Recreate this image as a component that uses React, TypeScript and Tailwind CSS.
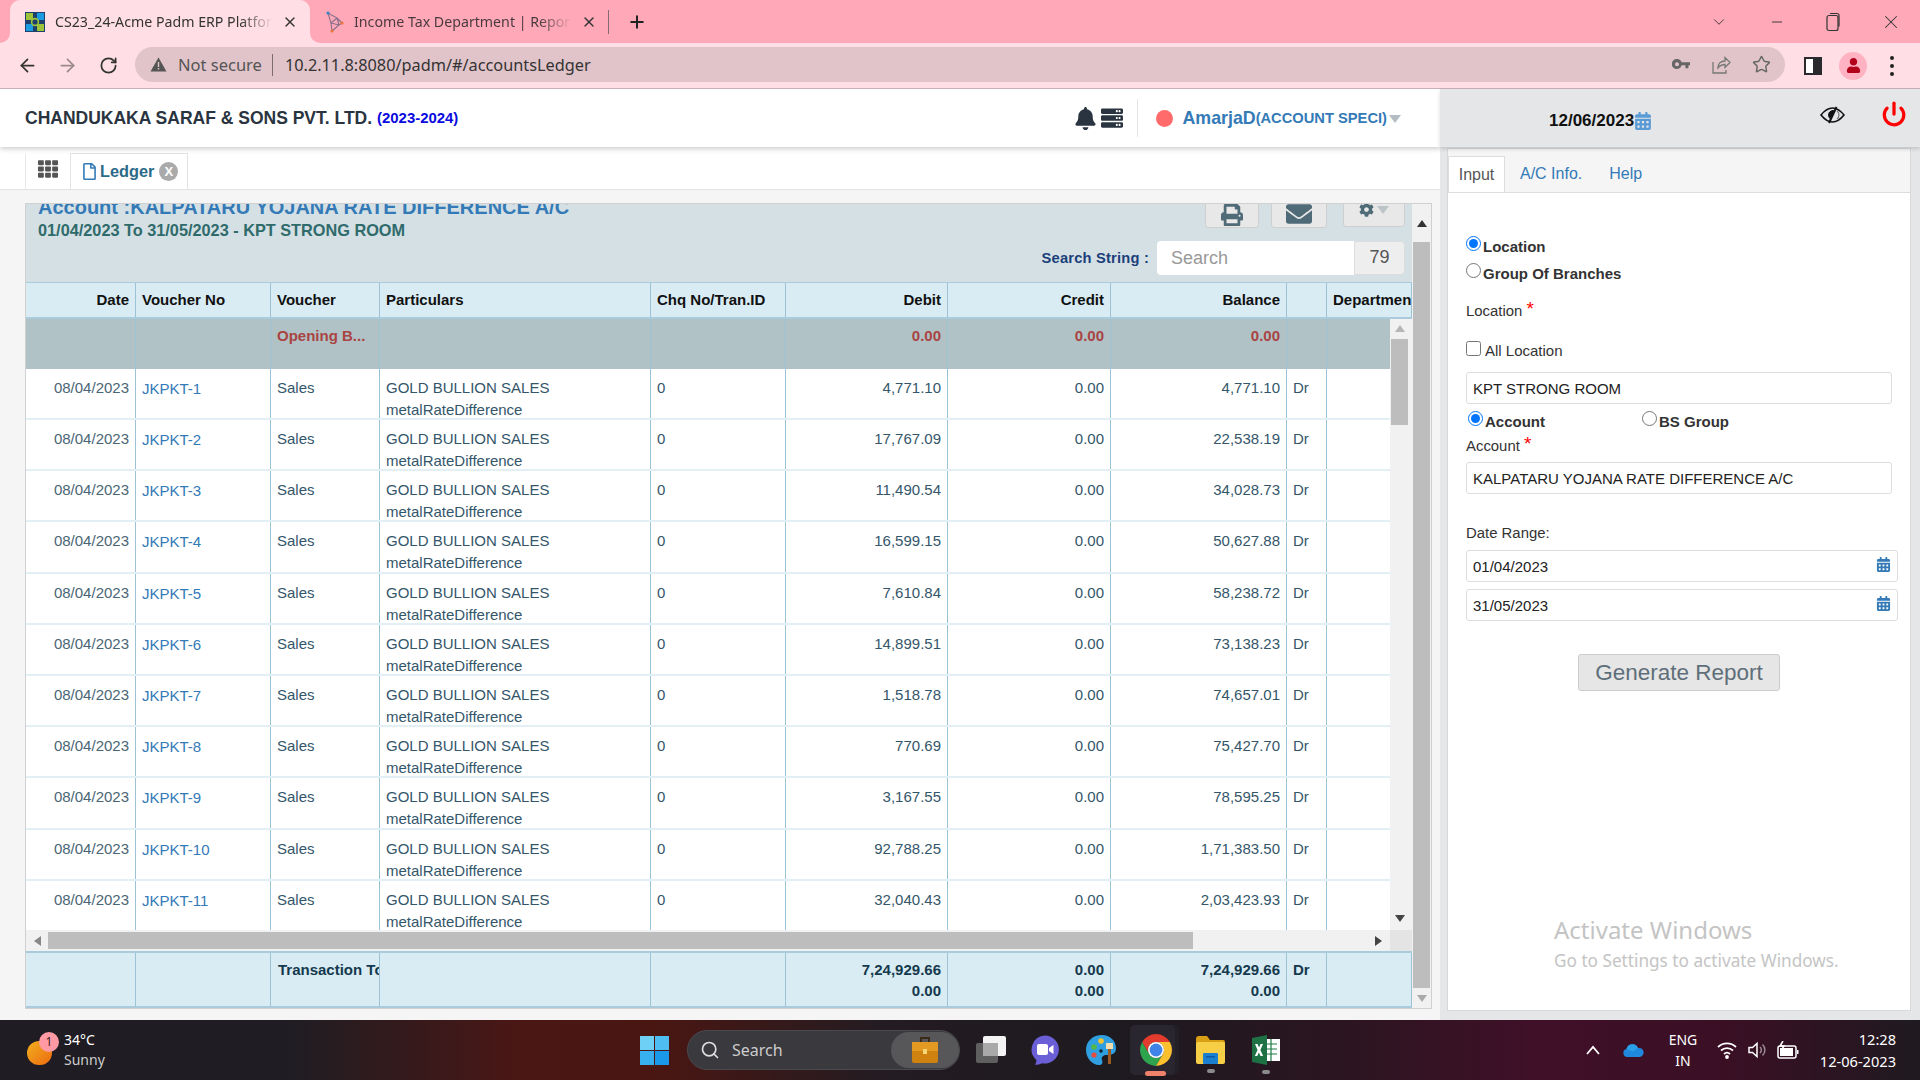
import { ArrowLeft, ArrowRight, ChevronDown, Minus, Plus, Power, RotateCw, Search, Star, X } from "lucide-react";
import { FaBell, FaCalendarAlt, FaCog, FaEnvelope, FaPrint, FaRegFile, FaServer, FaTh, FaUser } from "react-icons/fa";

const rows = [
  ["JKPKT-1", "4,771.10", "4,771.10"],
  ["JKPKT-2", "17,767.09", "22,538.19"],
  ["JKPKT-3", "11,490.54", "34,028.73"],
  ["JKPKT-4", "16,599.15", "50,627.88"],
  ["JKPKT-5", "7,610.84", "58,238.72"],
  ["JKPKT-6", "14,899.51", "73,138.23"],
  ["JKPKT-7", "1,518.78", "74,657.01"],
  ["JKPKT-8", "770.69", "75,427.70"],
  ["JKPKT-9", "3,167.55", "78,595.25"],
  ["JKPKT-10", "92,788.25", "1,71,383.50"],
  ["JKPKT-11", "32,040.43", "2,03,423.93"],
];

const gridCols = "grid grid-cols-[110px_135px_109px_271px_135px_162px_163px_176px_40px_85px]";
const cell = "border-r border-[#9cc3d5] px-[6px] overflow-hidden whitespace-nowrap";
const cellR = "border-r border-[#9cc3d5] pl-[6px] pr-[6px] text-right overflow-hidden whitespace-nowrap";

function Flare({ side }: { side: "left" | "right" }) {
  return (
    <div className="w-[10px] h-[10px] bg-[#ffdfe5] self-end">
      <div className={`w-full h-full bg-[#ffa9b8] ${side === "left" ? "rounded-br-[10px]" : "rounded-bl-[10px]"}`} />
    </div>
  );
}

function TabBar() {
  return (
    <div className="h-[43px] bg-[#ffa9b8] flex items-stretch text-[14.2px] text-[#333]">
      <Flare side="left" />
      <div className="w-[300px] bg-[#ffdfe5] rounded-t-[10px] flex items-center pl-[15px]">
        <svg width="20" height="20" viewBox="0 0 20 20" className="shrink-0">
          <rect width="20" height="20" fill="#1d3f6b" />
          <rect x="1" y="1" width="7" height="7" fill="#9cc33a" />
          <rect x="12" y="1" width="7" height="7" fill="#1b9ce0" />
          <rect x="1" y="12" width="7" height="7" fill="#1b9ce0" />
          <rect x="12" y="12" width="7" height="7" fill="#9cc33a" />
          <circle cx="10" cy="10" r="3.4" fill="none" stroke="#9cc33a" strokeWidth="1.6" />
        </svg>
        <span className="ml-[10px] w-[218px] overflow-hidden whitespace-nowrap [mask-image:linear-gradient(to_right,black_85%,transparent)]">CS23_24-Acme Padm ERP Platform</span>
        <X size={16} className="ml-[9px] shrink-0" />
      </div>
      <Flare side="right" />
      <div className="flex items-center pl-[5px]">
        <svg width="20" height="22" viewBox="0 0 20 22" className="shrink-0" fill="none">
          <path d="M3 2 L12 7 L6 12 L14 14 L7 20 M3 2 L6 12 L7 20 M12 7 L14 14 M12 7 L17 12 L14 14" stroke="#8a6f8a" strokeWidth="1.1" />
          <circle cx="3" cy="2" r="1.6" fill="#3d7fc4" />
          <circle cx="17" cy="12" r="1.6" fill="#e8763a" />
          <circle cx="7" cy="20" r="1.6" fill="#e8763a" />
        </svg>
        <span className="ml-[9px] w-[218px] overflow-hidden whitespace-nowrap text-[#4a3a40] [mask-image:linear-gradient(to_right,black_85%,transparent)]">Income Tax Department | Reporting</span>
        <X size={16} className="ml-[9px] shrink-0" />
        <div className="ml-[11px] w-px h-[24px] bg-[#8a6a72]" />
        <Plus size={20} strokeWidth={2.4} className="ml-[18px] text-[#222]" />
      </div>
      <div className="ml-auto flex items-center text-[#333]">
        <ChevronDown size={18} strokeWidth={1.2} className="mr-[41px]" />
        <Minus size={16} strokeWidth={1.4} className="mr-[40px]" />
        <svg width="16" height="20" viewBox="0 0 16 20" fill="none" stroke="currentColor" strokeWidth="1.2" className="mr-[39px]">
          <rect x="2" y="3.5" width="11" height="15" rx="2" />
          <path d="M5 1.5 h7 a2 2 0 0 1 2 2 v11" />
        </svg>
        <X size={22} strokeWidth={1.1} className="mr-[18px]" />
      </div>
    </div>
  );
}

function Toolbar() {
  return (
    <div className="h-[46px] bg-[#ffdfe5] border-b border-[#c9b0b8] flex items-center text-[#333]">
      <ArrowLeft size={21} strokeWidth={2} className="ml-[17px] shrink-0" />
      <ArrowRight size={21} strokeWidth={2} className="ml-[19px] shrink-0 text-[#9a8a8e]" />
      <RotateCw size={19} strokeWidth={2.2} className="ml-[21px] shrink-0" />
      <div className="ml-[17px] w-[1650px] h-[35px] rounded-full bg-[#e0c4c9] flex items-center mb-[2px]">
        <svg width="17" height="15" viewBox="0 0 17 15" className="ml-[15px] shrink-0">
          <path d="M8.5 0.5 L16.5 14.5 H0.5 Z" fill="#555" />
          <rect x="7.8" y="5" width="1.4" height="5" fill="#e0c4c9" />
          <rect x="7.8" y="11" width="1.4" height="1.5" fill="#e0c4c9" />
        </svg>
        <span className="ml-[11px] mt-[1px] text-[16.5px] text-[#555]">Not secure</span>
        <div className="ml-[10px] w-px h-[22px] bg-[#7c6a6e]" />
        <span className="ml-[12px] mt-[1px] text-[16.3px] text-[#333]">10.2.11.8:8080/padm/#/accountsLedger</span>
        <div className="ml-auto flex items-center mr-[14px] text-[#666]">
          <svg width="18" height="11" viewBox="0 0 18 11" className="mr-[22px]">
            <path d="M5 0a5 5 0 0 1 4.6 3.2H18v3h-1.6v3h-3v-3H9.6A5 5 0 1 1 5 0zm0 3.2a2 2 0 1 0 0 4 2 2 0 0 0 0-4z" fill="#666" fillRule="evenodd" />
          </svg>
          <svg width="19" height="19" viewBox="0 0 19 19" fill="none" stroke="#777" strokeWidth="1.3" className="mr-[21px]">
            <path d="M1 7v11h13v-3" />
            <path d="M6 13c0-5 3-7 7-7V2.5l5 5-5 5V9.5c-3 0-5 1-7 3.5z" />
          </svg>
          <Star size={19} strokeWidth={1.8} />
        </div>
      </div>
      <div className="ml-[19px] w-[18px] h-[18px] border-[2px] border-[#2a2a2e] border-r-[9px] shrink-0 bg-white" />
      <div className="ml-[17px] w-[28px] h-[28px] rounded-full bg-[#ffb3c2] flex items-center justify-center shrink-0">
        <FaUser size={15} className="text-[#b3001b]" />
      </div>
      <div className="ml-[23px] flex flex-col gap-[4px] shrink-0">
        <div className="w-[4px] h-[4px] rounded-full bg-[#222]" />
        <div className="w-[4px] h-[4px] rounded-full bg-[#222]" />
        <div className="w-[4px] h-[4px] rounded-full bg-[#222]" />
      </div>
    </div>
  );
}

function AppHeader() {
  return (
    <div className="h-[58px] bg-white flex items-center shadow-[0_2px_5px_rgba(0,0,0,0.2)] relative z-10">
      <span className="ml-[25px] text-[17.5px] font-bold text-[#2a3440]">CHANDUKAKA SARAF &amp; SONS PVT. LTD.</span>
      <span className="ml-[5px] text-[14.9px] font-bold text-[#0a0ae0] mt-[1px]">(2023-2024)</span>
      <FaBell size={23} className="ml-auto text-[#2a3440]" />
      <FaServer size={22} className="ml-[4px] text-[#2a3440]" />
      <div className="ml-[14px] w-px h-[38px] bg-[#e5e5e5]" />
      <div className="ml-[18px] w-[17px] h-[17px] rounded-full bg-[#ff6b6b]" />
      <span className="ml-[9px] text-[17.8px] font-bold text-[#337ab7]">AmarjaD</span>
      <span className="text-[14.7px] font-bold text-[#337ab7] mt-[1px]">(ACCOUNT SPECI)</span>
      <svg width="12" height="8" viewBox="0 0 12 8" className="ml-[2px] mr-[39px] mt-[2px]"><path d="M0 0H12L6 8Z" fill="#b5bcc2" /></svg>
    </div>
  );
}

function LeftTabs() {
  return (
    <div className="h-[43px] bg-white border-b border-[#e3e3e3] flex items-end pl-[25px]">
      <div className="w-[45px] h-[35px] border-l border-[#e8e8e8] flex justify-center pt-[5px]">
        <FaTh size={20} className="text-[#555]" />
      </div>
      <div className="w-[118px] h-[36px] border border-b-0 border-[#e3e3e3] bg-white flex items-center pl-[10px]">
        <FaRegFile size={17} className="text-[#337ab7]" />
        <span className="ml-[2px] text-[16.3px] font-bold text-[#2b6a88]">Ledger</span>
        <span className="ml-[5px] w-[19px] h-[19px] rounded-full bg-[#aaa] text-white text-[13px] font-bold flex items-center justify-center">X</span>
      </div>
    </div>
  );
}

function PanelHeading() {
  return (
    <div className="h-[78px] bg-[#d5e0e5] flex justify-between overflow-hidden">
      <div className="pl-[12px] -mt-[9px]">
        <div className="text-[20px] leading-[24px] font-bold text-[#337ab7] whitespace-nowrap">Account :KALPATARU YOJANA RATE DIFFERENCE A/C</div>
        <div className="text-[16.3px] leading-[20px] font-bold text-[#2f6b6b] whitespace-nowrap mt-[1px]">01/04/2023 To 31/05/2023 - KPT STRONG ROOM</div>
      </div>
      <div className="flex flex-col items-end pr-[7px]">
        <div className="h-[24px] flex items-end">
          <div className="w-[54px] h-[30px] bg-[#e8e8e8] border border-[#cfcfcf] rounded-[3px] flex items-center justify-center pt-[4px]">
            <FaPrint size={22} className="text-[#4f6b78]" />
          </div>
          <div className="ml-[12px] w-[56px] h-[30px] bg-[#e8e8e8] border border-[#cfcfcf] rounded-[3px] flex items-center justify-center pt-[2px]">
            <FaEnvelope size={26} className="text-[#4f6b78]" />
          </div>
          <div className="ml-[16px] w-[62px] h-[30px] bg-[#e8e8e8] border border-[#cfcfcf] rounded-[3px] flex items-start justify-center pt-[4px] mb-[1px]">
            <FaCog size={15} className="text-[#4f6b78]" />
            <svg width="12" height="8" viewBox="0 0 12 8" className="ml-[3px] mt-[4px]"><path d="M0 0H12L6 8Z" fill="#bcc4c8" /></svg>
          </div>
        </div>
        <div className="mt-[13px] flex items-center">
          <span className="text-[14.7px] font-bold text-[#1b3f7a] mr-[8px] tracking-[0.2px]">Search String :</span>
          <div className="w-[197px] h-[34px] bg-white rounded-l-[4px] flex items-center pl-[14px] text-[18px] text-[#999]">Search</div>
          <div className="w-[51px] h-[34px] bg-[#eee] border border-[#ddd] rounded-r-[4px] flex items-center justify-center text-[18px] text-[#555] -mt-[1px]">79</div>
        </div>
      </div>
    </div>
  );
}

function HeaderRow() {
  const heads = ["Date", "Voucher No", "Voucher", "Particulars", "Chq No/Tran.ID", "Debit", "Credit", "Balance", "", "Department"];
  return (
    <div className={`${gridCols} h-[37px] bg-[#d9ecf4] border-t border-b-2 border-[#a9cbdb] text-[15px] leading-[34px] font-bold text-[#111] overflow-hidden`}>
      {heads.map((h, i) => (
        <div key={i} className={i === 0 || (i >= 5 && i <= 7) ? cellR : cell}>{h}</div>
      ))}
    </div>
  );
}

function OpeningRow() {
  return (
    <div className={`${gridCols} h-[50px] bg-[#b0c2c6] text-[15px] leading-[34px] font-bold text-[#a94442]`}>
      <div className={cell} />
      <div className={cell} />
      <div className={cell}>Opening B...</div>
      <div className={cell} />
      <div className={cell} />
      <div className={cellR}>0.00</div>
      <div className={cellR}>0.00</div>
      <div className={cellR}>0.00</div>
      <div className={cell} />
      <div className={cell} />
    </div>
  );
}

function LedgerRow({ no, debit, balance }: { no: string; debit: string; balance: string }) {
  return (
    <div className={`${gridCols} h-[51.2px] bg-white border-b-2 border-[#e2eff5] text-[15px] leading-[22px] text-[#34566a]`}>
      <div className={`${cellR} pt-[8px] text-[#4a6675]`}>08/04/2023</div>
      <div className={`${cell} pt-[9px] text-[#337ab7]`}>{no}</div>
      <div className={`${cell} pt-[8px]`}>Sales</div>
      <div className={`${cell} pt-[8px]`}>
        <div>GOLD BULLION SALES</div>
        <div>metalRateDifference</div>
      </div>
      <div className={`${cell} pt-[8px]`}>0</div>
      <div className={`${cellR} pt-[8px]`}>{debit}</div>
      <div className={`${cellR} pt-[8px]`}>0.00</div>
      <div className={`${cellR} pt-[8px]`}>{balance}</div>
      <div className={`${cell} pt-[8px]`}>Dr</div>
      <div className={cell} />
    </div>
  );
}

function FooterRow() {
  return (
    <div className={`${gridCols} h-[57px] bg-[#d9ecf4] border-t-2 border-b-2 border-[#a9cbdb] text-[15px] leading-[21px] font-bold text-[#15394d] overflow-hidden`}>
      <div className={cell} />
      <div className={cell} />
      <div className={`${cell} pt-[6px] pl-[7px]`}>Transaction Total</div>
      <div className={cell} />
      <div className={cell} />
      <div className={`${cellR} pt-[6px]`}><div>7,24,929.66</div><div>0.00</div></div>
      <div className={`${cellR} pt-[6px]`}><div>0.00</div><div>0.00</div></div>
      <div className={`${cellR} pt-[6px]`}><div>7,24,929.66</div><div>0.00</div></div>
      <div className={`${cell} pt-[6px]`}>Dr</div>
      <div className={cell} />
    </div>
  );
}

function Arrow({ dir, color }: { dir: "up" | "down" | "left" | "right"; color: string }) {
  const d = { up: "M0 7L5 0L10 7Z", down: "M0 0L5 7L10 0Z", left: "M7 0L0 5L7 10Z", right: "M0 0L7 5L0 10Z" }[dir];
  const horizontal = dir === "left" || dir === "right";
  return (
    <svg width={horizontal ? 7 : 10} height={horizontal ? 10 : 7} viewBox={horizontal ? "0 0 7 10" : "0 0 10 7"}>
      <path d={d} fill={color} />
    </svg>
  );
}

function LedgerPanel() {
  return (
    <div className="h-[806px] w-[1407px] bg-[#f1f1f1] border border-[#d0d0d0] flex overflow-hidden">
      <div className="w-[1386px] shrink-0 flex flex-col overflow-hidden">
        <PanelHeading />
        <HeaderRow />
        {/* body with its own scrollbars */}
        <div className="h-[612px] flex overflow-hidden">
          <div className="flex-1 overflow-hidden">
            <OpeningRow />
            {rows.map((r) => (
              <LedgerRow key={r[0]} no={r[0]} debit={r[1]} balance={r[2]} />
            ))}
          </div>
          <div className="w-[22px] bg-[#f1f1f1] flex flex-col items-center">
            <div className="h-[20px] flex items-center pr-[3px]"><Arrow dir="up" color="#b5b5b5" /></div>
            <div className="w-[17px] h-[86px] bg-[#bdbdbd] mr-[3px]" />
            <div className="mt-auto h-[24px] flex items-center pr-[3px]"><Arrow dir="down" color="#444" /></div>
          </div>
        </div>
        <div className="h-[21px] bg-[#f1f1f1] flex items-center">
          <div className="w-[22px] flex justify-center"><Arrow dir="left" color="#888" /></div>
          <div className="w-[1145px] h-[17px] bg-[#bdbdbd]" />
          <div className="ml-auto w-[22px] flex justify-center mr-[1px]"><Arrow dir="right" color="#444" /></div>
          <div className="w-[22px] h-full bg-[#e4e4e4]" />
        </div>
        <FooterRow />
      </div>
      <div className="flex-1 bg-[#f1f1f1] flex flex-col items-center">
        <div className="h-[38px] flex items-center"><Arrow dir="up" color="#333" /></div>
        <div className="w-[17px] h-[746px] bg-[#bdbdbd]" />
        <div className="h-[20px] flex items-center"><Arrow dir="down" color="#aaa" /></div>
      </div>
    </div>
  );
}

function RequiredLabel({ text }: { text: string }) {
  return (
    <div className="h-[20px] text-[14.9px] leading-[18px] text-[#333]">
      {text} <span className="text-[#f00] text-[19px] leading-none relative -top-[1px]">*</span>
    </div>
  );
}

function DateField({ value }: { value: string }) {
  return (
    <div className="relative w-[432px] mt-[7px]">
      <input readOnly defaultValue={value} className="w-full h-[32px] border border-[#ddd] rounded-[3px] pl-[6px] text-[15px] text-[#222] bg-white outline-none" />
      <FaCalendarAlt size={15} className="absolute right-[7px] top-[7px] text-[#337ab7]" />
    </div>
  );
}

function RightPanel() {
  return (
    <div className="w-[480px] h-[931px] bg-[#e4e6e8] flex flex-col relative">
      <div className="h-[58px] flex items-center shadow-[0_2px_4px_rgba(0,0,0,0.15)] relative z-10">
        <span className="ml-[109px] text-[17px] font-bold text-[#111] mt-[6px]">12/06/2023</span>
        <FaCalendarAlt size={18} className="text-[#5b9bd5] mt-[6px]" />
        <svg width="25" height="18" viewBox="0 0 25 18" fill="none" className="ml-[168px] mb-[6px]">
          <path d="M1 9C5 4 9 2 12.5 2S20 4 24 9C20 14 16 16 12.5 16S5 14 1 9Z" stroke="#111" strokeWidth="1.6" />
          <path d="M8 9a5 5 0 0 1 7-4.5L10 13a5 5 0 0 1-2-4Z" fill="#111" />
          <path d="M16.5 1L9 17" stroke="#111" strokeWidth="2" />
          <path d="M17 5a5 5 0 0 1 0 8" stroke="#777" strokeWidth="1.2" />
        </svg>
        <Power size={26} strokeWidth={3} className="ml-[36px] mb-[8px] text-[#f00]" />
      </div>
      <div className="ml-[7px] w-[464px] h-[863px] mt-[1px] bg-white border border-[#d8d8d8] flex flex-col">
        <div className="h-[44px] bg-[#f5f5f5] border-b border-[#ddd] flex items-end text-[16px]">
          <div className="w-[57px] h-[36px] bg-white border border-b-0 border-[#ddd] flex items-center justify-center text-[#555]">Input</div>
          <span className="ml-[15px] h-[36px] leading-[36px] text-[#337ab7]">A/C Info.</span>
          <span className="ml-[27px] h-[36px] leading-[36px] text-[#337ab7]">Help</span>
        </div>
        <div className="pl-[18px] pt-[43px] flex-1">
          <div className="h-[27px] flex items-start">
            <input type="radio" name="scope" defaultChecked className="w-[15px] h-[15px] m-0" />
            <span className="ml-[2px] mt-[2px] text-[15px] font-bold leading-[18px] text-[#333]">Location</span>
          </div>
          <div className="h-[37px] flex items-start">
            <input type="radio" name="scope" className="w-[15px] h-[15px] m-0" />
            <span className="ml-[2px] mt-[2px] text-[15px] font-bold leading-[18px] text-[#333]">Group Of Branches</span>
          </div>
          <RequiredLabel text="Location" />
          <div className="mt-[21px] h-[31px] flex items-start">
            <input type="checkbox" className="w-[15px] h-[15px] m-0" />
            <span className="ml-[4px] mt-[1px] text-[15px] leading-[18px] text-[#333]">All Location</span>
          </div>
          <input readOnly defaultValue="KPT STRONG ROOM" className="block w-[426px] h-[32px] border border-[#ddd] rounded-[3px] pl-[6px] pt-[1px] text-[15px] text-[#222] bg-white outline-none" />
          <div className="mt-[7px] h-[24px] flex items-start pl-[2px]">
            <input type="radio" name="kind" defaultChecked className="w-[15px] h-[15px] m-0" />
            <span className="ml-[2px] mt-[2px] w-[157px] text-[15px] font-bold leading-[18px] text-[#333]">Account</span>
            <input type="radio" name="kind" className="w-[15px] h-[15px] m-0" />
            <span className="ml-[2px] mt-[2px] text-[15px] font-bold leading-[18px] text-[#333]">BS Group</span>
          </div>
          <RequiredLabel text="Account" />
          <input readOnly defaultValue="KALPATARU YOJANA RATE DIFFERENCE A/C" className="block mt-[7px] w-[426px] h-[32px] border border-[#ddd] rounded-[3px] pl-[6px] pt-[1px] text-[15px] text-[#222] bg-white outline-none" />
          <div className="mt-[29px] h-[20px] text-[14.9px] leading-[20px] text-[#333]">Date Range:</div>
          <DateField value="01/04/2023" />
          <DateField value="31/05/2023" />
          <div className="mt-[33px] w-[426px] flex justify-center">
            <button className="w-[202px] h-[37px] pt-[1px] bg-[#e6e6e6] border border-[#ccc] rounded-[3px] text-[22.5px] text-[#5f6f7a]">Generate Report</button>
          </div>
        </div>
      </div>
      <div className="absolute left-[114px] top-[826px] text-[#c4c4c4] font-['Noto_Sans',sans-serif]">
        <div className="text-[24px] leading-[30px]">Activate Windows</div>
        <div className="text-[17.2px] leading-[26px] mt-[3px] whitespace-nowrap">Go to Settings to activate Windows.</div>
      </div>
    </div>
  );
}

function ChromeLogo() {
  return (
    <svg width="32" height="32" viewBox="4 4 40 40">
      <path d="M41.32 14A20 20 0 0 0 6.68 14L15.34 29A10 10 0 0 1 24 14Z" fill="#e33b2e" />
      <path d="M6.68 14A20 20 0 0 0 24 44L32.66 29A10 10 0 0 1 15.34 29Z" fill="#2fa44f" />
      <path d="M24 44A20 20 0 0 0 41.32 14L24 14A10 10 0 0 1 32.66 29Z" fill="#fbc02d" />
      <circle cx="24" cy="24" r="10" fill="#fff" />
      <circle cx="24" cy="24" r="8" fill="#3f83e8" />
    </svg>
  );
}

function Taskbar() {
  return (
    <div className="h-[60px] flex items-center bg-[linear-gradient(90deg,#1f1d23_0%,#1f1d23_15%,#4a1715_27%,#4a1612_34%,#231c22_46%,#1d1a20_58%,#2b1520_70%,#401028_80%,#3a0f24_90%,#1f1a20_100%)] text-white relative font-['Noto_Sans',sans-serif]">
      <div className="relative ml-[27px] w-[25px] h-[24px] mt-[6px] rounded-full bg-[linear-gradient(135deg,#f2b01e,#ec6a10)]">
        <div className="absolute -top-[9px] left-[12px] w-[20px] h-[20px] rounded-full bg-[#ff9aa5] text-[#3a1a1a] text-[12px] flex items-center justify-center">1</div>
      </div>
      <div className="ml-[12px] w-[60px] text-[14px] leading-[20px]">
        <div>34°C</div>
        <div className="text-[#ccc]">Sunny</div>
      </div>
      <svg width="29" height="29" viewBox="0 0 29 29" className="ml-[516px]">
        <rect x="0" y="0" width="14" height="14" fill="#6fd0f5" />
        <rect x="15" y="0" width="14" height="14" fill="#4dbdf2" />
        <rect x="0" y="15" width="14" height="14" fill="#38b0f0" />
        <rect x="15" y="15" width="14" height="14" fill="#1a98ea" />
      </svg>
      <div className="ml-[18px] w-[273px] h-[40px] rounded-full bg-[#39393e] flex items-center border border-[#4a4a4e]">
        <Search size={20} strokeWidth={2} className="ml-[12px] text-[#ddd]" />
        <span className="ml-[12px] text-[16px] text-[#ccc]">Search</span>
        <div className="ml-auto w-[68px] h-[36px] rounded-full bg-[#57575a] flex items-center justify-center">
          <svg width="28" height="28" viewBox="0 0 28 28">
            <rect x="10" y="2" width="8" height="5" fill="none" stroke="#3a2a1a" strokeWidth="2" />
            <rect x="1" y="6" width="26" height="21" rx="2" fill="#d08210" />
            <rect x="1" y="6" width="26" height="9" fill="#e29a22" />
            <rect x="12" y="13" width="4" height="5" fill="#f7d774" />
          </svg>
        </div>
      </div>
      <svg width="31" height="28" viewBox="0 0 31 28" className="ml-[15px]">
        <rect x="1" y="7" width="22" height="20" rx="2" fill="#5f5f60" />
        <rect x="8" y="0" width="23" height="20" rx="2" fill="#f3f3f3" />
        <rect x="8" y="7" width="15" height="13" fill="#a9a9a9" />
      </svg>
      <svg width="30" height="30" viewBox="0 0 30 30" className="ml-[24px]">
        <path d="M15 0.5a14 14 0 1 1-3 27.7c-2 1-4.500 1.500-7 1.500 1-1.500 1.500-3 1.300-4.800A14 14 0 0 1 15 0.500z" fill="#6a5fd6" />
        <rect x="7" y="9" width="11" height="11" rx="2" fill="#fff" />
        <path d="M19 13l4.500-3v9L19 16z" fill="#fff" />
      </svg>
      <svg width="32" height="30" viewBox="0 0 32 30" className="ml-[26px]">
        <path d="M16 0C7 0 0 6 0 15c0 8 6 15 13 15 3 0 4-2 3-5-1-3 1-5 5-5 5 0 9-1 9-7C30 6 24 0 16 0z" fill="#2f9fe0" />
        <circle cx="8" cy="12" r="2.800" fill="#55b747" />
        <circle cx="15" cy="6" r="2.800" fill="#f4c430" />
        <circle cx="8" cy="20" r="2.600" fill="#e84c3d" />
        <circle cx="15" cy="16" r="1.800" fill="#123" />
        <rect x="22" y="14" width="3" height="15" fill="#9a5a20" />
        <rect x="20" y="8" width="7" height="6" fill="#f2dcb0" />
      </svg>
      <div className="ml-[12px] w-[45px] h-[50px] pl-[6px] rounded-[5px] bg-[#2a2630] shadow-[4px_0_0_#231f27] flex flex-col items-center justify-center relative">
        <ChromeLogo />
        <div className="absolute bottom-[-1px] w-[21px] h-[5px] rounded-full bg-[#f0826c]" />
      </div>
      <div className="ml-[20px] w-[31px] relative flex justify-center">
        <svg width="31" height="28" viewBox="0 0 31 28">
          <path d="M1 3a3 3 0 0 1 3-3h8l3 4h13a2 2 0 0 1 2 2v4H1z" fill="#d9a016" />
          <rect x="1" y="6" width="29" height="22" rx="2" fill="#f7cf46" />
          <rect x="8" y="17" width="15" height="11" rx="1" fill="#1a7fd0" />
          <rect x="11" y="20" width="9" height="1.500" fill="#0f5aa0" />
        </svg>
        <div className="absolute -bottom-[9px] w-[8px] h-[4px] rounded-full bg-[#8a8a8a]" />
      </div>
      <div className="ml-[25px] w-[30px] relative flex justify-center">
        <svg width="28" height="30" viewBox="0 0 28 30">
          <rect x="11" y="4" width="17" height="22" fill="#fff" />
          <path d="M14 9h11M14 14h11M14 19h11M19 4v22" stroke="#1f7a45" strokeWidth="1.200" />
          <path d="M0 3l15-3v30L0 27z" fill="#1e7145" />
          <path d="M3 9h2.600l1.400 3.400L8.500 9H11l-2.600 6 2.700 6H8.500l-1.600-3.600L5.300 21H2.800l2.700-6z" fill="#fff" />
        </svg>
        <div className="absolute -bottom-[9px] w-[8px] h-[4px] rounded-full bg-[#8a8a8a]" />
      </div>
      <svg width="14" height="10" viewBox="0 0 14 10" fill="none" stroke="#fff" strokeWidth="1.8" className="ml-[305px]"><path d="M1 9l6-7 6 7" /></svg>
      <svg width="21" height="14" viewBox="0 0 21 14" className="ml-[23px]">
        <path d="M4.500 14a4 4 0 0 1-1-7.900A6 6 0 0 1 15 5a4.500 4.500 0 0 1 2 9z" fill="#1f88dd" />
        <path d="M3.500 6.100A6 6 0 0 1 15 5l-5 3.500z" fill="#2aa0e8" />
      </svg>
      <div className="ml-[24px] w-[30px] text-center text-[14px] leading-[21px] -mt-[1px]">
        <div>ENG</div>
        <div>IN</div>
      </div>
      <svg width="20" height="18" viewBox="0 0 20 18" fill="none" stroke="#fff" strokeWidth="1.800" className="ml-[19px]">
        <path d="M1 6a13 13 0 0 1 18 0M4 9.500a9 9 0 0 1 12 0M7 13a4.500 4.500 0 0 1 6 0" />
        <circle cx="10" cy="16" r="1" fill="#fff" />
      </svg>
      <svg width="19" height="18" viewBox="0 0 19 18" fill="none" stroke="#fff" strokeWidth="1.500" className="ml-[11px]">
        <path d="M1 6.500h3.500L9 2.500v13l-4.500-4H1z" />
        <path d="M12 6a4 4 0 0 1 0 6M14.500 3.500a7.500 7.500 0 0 1 0 11" stroke="#9b8a92" />
      </svg>
      <svg width="23" height="18" viewBox="0 0 23 18" fill="none" stroke="#fff" strokeWidth="1.500" className="ml-[9px]">
        <rect x="2" y="5" width="18" height="12" rx="2" />
        <rect x="4" y="7" width="13" height="8" fill="#fff" stroke="none" />
        <rect x="21" y="9" width="1.500" height="4" fill="#fff" stroke="none" />
        <path d="M7 0L4 5h4l-3 5" />
      </svg>
      <div className="ml-auto mr-[24px] text-right text-[14.6px] leading-[22px]">
        <div>12:28</div>
        <div>12-06-2023</div>
      </div>
    </div>
  );
}

export default function App() {
  return (
    <div className="w-[1920px] h-[1080px] flex flex-col overflow-hidden bg-[#f5f5f5] font-['Liberation_Sans',Arial,sans-serif]">
      <div className="font-['Noto_Sans',sans-serif]">
        <TabBar />
        <Toolbar />
      </div>
      <div className="flex h-[931px]">
        <div className="w-[1440px] flex flex-col overflow-hidden">
          <AppHeader />
          <LeftTabs />
          <div className="pl-[25px] pt-[13px] flex-1 bg-[#f5f5f5]">
            <LedgerPanel />
          </div>
        </div>
        <RightPanel />
      </div>
      <Taskbar />
    </div>
  );
}
